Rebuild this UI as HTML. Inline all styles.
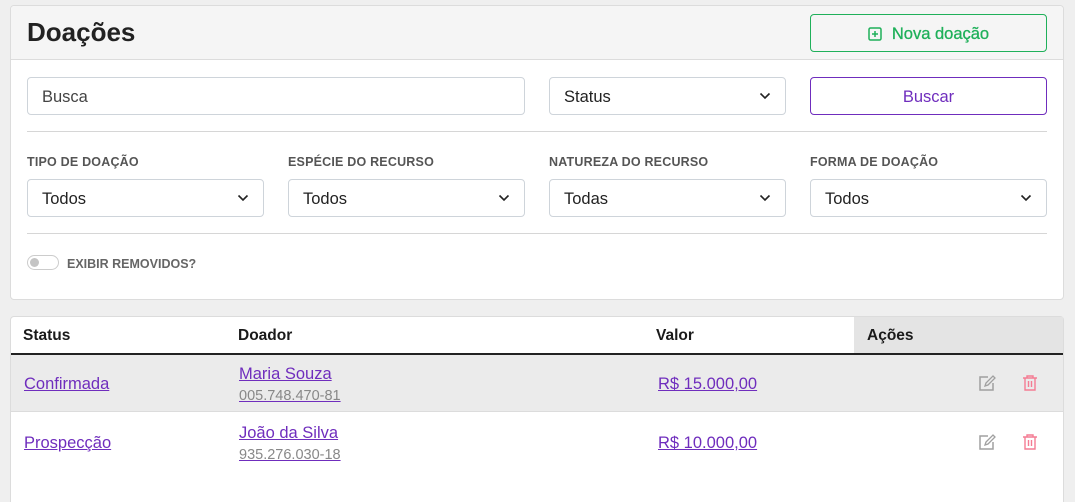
<!DOCTYPE html>
<html><head><meta charset="utf-8"><style>
*{box-sizing:border-box;margin:0;padding:0}
html,body{width:1075px;height:502px;overflow:hidden}
body{background:#efefef;font-family:"Liberation Sans",Arial,sans-serif;position:relative;color:#222}
.abs{position:absolute}
.card{position:absolute;left:10px;width:1054px;background:#fff;border:1px solid #dcdcdc;border-radius:4px}
.field{position:absolute;height:38px;border:1px solid #ced4da;border-radius:4px;background:#fff;font-size:16.5px;line-height:38px;padding-left:14px;color:#222}
.chev{position:absolute;right:14px;top:14px;width:12px;height:8px}
.lbl{position:absolute;top:155px;font-size:12.5px;font-weight:bold;color:#555;letter-spacing:.2px}
.hr{position:absolute;left:27px;width:1020px;height:1px;background:#d6d6d6}
a{color:#6f2dbd;text-decoration:underline}
.th{position:absolute;top:327px;font-size:15.5px;font-weight:bold;color:#1a1a1a}
</style></head><body>
<div class="card" style="top:5px;height:295px"></div>
<div class="abs" style="left:11px;top:6px;width:1052px;height:54px;background:#f5f5f5;border-bottom:1px solid #dcdcdc;border-radius:4px 4px 0 0"></div>
<div class="abs" style="left:27px;top:17px;font-size:26px;font-weight:bold;color:#222">Doações</div>
<div class="abs" style="left:810px;top:14px;width:237px;height:38px;border:1px solid #1fb05a;border-radius:4px;color:#1fb05a;font-size:16.5px;line-height:38px;text-align:center;-webkit-text-stroke:0.3px #1fb05a">
<svg width="14" height="14" viewBox="0 0 14 14" style="vertical-align:-2px;margin-right:10px"><rect x="1" y="1" width="12" height="12" rx="1.5" fill="none" stroke="#1fb05a" stroke-width="1.5"/><path d="M7 4v6M4 7h6" stroke="#1fb05a" stroke-width="1.5"/></svg>Nova doação</div>

<div class="field" style="left:27px;top:77px;width:498px;color:#444">Busca</div>
<div class="field" style="left:549px;top:77px;width:237px">Status<svg class="chev" viewBox="0 0 12 8"><path d="M1.5 1.5l4.5 4.5 4.5-4.5" fill="none" stroke="#222" stroke-width="1.6"/></svg></div>
<div class="abs" style="left:810px;top:77px;width:237px;height:38px;border:1px solid #6f2dbd;border-radius:4px;color:#6f2dbd;font-size:16.5px;line-height:38px;text-align:center">Buscar</div>
<div class="hr" style="top:131px"></div>

<div class="lbl" style="left:27px">TIPO DE DOAÇÃO</div>
<div class="lbl" style="left:288px">ESPÉCIE DO RECURSO</div>
<div class="lbl" style="left:549px">NATUREZA DO RECURSO</div>
<div class="lbl" style="left:810px">FORMA DE DOAÇÃO</div>
<div class="field" style="left:27px;top:179px;width:237px">Todos<svg class="chev" viewBox="0 0 12 8"><path d="M1.5 1.5l4.5 4.5 4.5-4.5" fill="none" stroke="#222" stroke-width="1.6"/></svg></div>
<div class="field" style="left:288px;top:179px;width:237px">Todos<svg class="chev" viewBox="0 0 12 8"><path d="M1.5 1.5l4.5 4.5 4.5-4.5" fill="none" stroke="#222" stroke-width="1.6"/></svg></div>
<div class="field" style="left:549px;top:179px;width:237px">Todas<svg class="chev" viewBox="0 0 12 8"><path d="M1.5 1.5l4.5 4.5 4.5-4.5" fill="none" stroke="#222" stroke-width="1.6"/></svg></div>
<div class="field" style="left:810px;top:179px;width:237px">Todos<svg class="chev" viewBox="0 0 12 8"><path d="M1.5 1.5l4.5 4.5 4.5-4.5" fill="none" stroke="#222" stroke-width="1.6"/></svg></div>
<div class="hr" style="top:233px"></div>

<div class="abs" style="left:27px;top:255px;width:32px;height:15px;border:1px solid #ccc;border-radius:8px;background:#fff"></div>
<div class="abs" style="left:30px;top:258px;width:9px;height:9px;border-radius:50%;background:#c4c4c4"></div>
<div class="abs" style="left:67px;top:257px;font-size:12.5px;font-weight:bold;color:#666">EXIBIR REMOVIDOS?</div>

<div class="card" style="top:316px;height:190px"></div>
<div class="abs" style="left:854px;top:317px;width:209px;height:36px;background:#e4e4e4"></div>
<div class="abs" style="left:11px;top:353px;width:1052px;height:2px;background:#222"></div>
<div class="th" style="left:23px">Status</div>
<div class="th" style="left:238px">Doador</div>
<div class="th" style="left:656px">Valor</div>
<div class="th" style="left:867px">Ações</div>

<div class="abs" style="left:11px;top:355px;width:1052px;height:57px;background:#ebebeb;border-bottom:1px solid #dcdcdc"></div>

<a class="abs" style="left:24px;top:375px;font-size:16.5px">Confirmada</a>
<a class="abs" style="left:239px;top:365px;font-size:16.5px">Maria Souza</a>
<a class="abs" style="left:239px;top:388px;font-size:14.5px;color:#888;text-decoration-color:#6f2dbd">005.748.470-81</a>
<a class="abs" style="left:658px;top:375px;font-size:16.5px">R$ 15.000,00</a>

<a class="abs" style="left:24px;top:434px;font-size:16.5px">Prospecção</a>
<a class="abs" style="left:239px;top:424px;font-size:16.5px">João da Silva</a>
<a class="abs" style="left:239px;top:447px;font-size:14.5px;color:#888;text-decoration-color:#6f2dbd">935.276.030-18</a>
<a class="abs" style="left:658px;top:434px;font-size:16.5px">R$ 10.000,00</a>

<svg class="abs" style="left:978px;top:374px" width="19" height="18" viewBox="0 0 19 18"><path d="M10 3H2v13h13V9" fill="none" stroke="#a0a0a0" stroke-width="1.5"/><path d="M7 12l1-3 7-7 2 2-7 7z" fill="none" stroke="#a0a0a0" stroke-width="1.3"/></svg>
<svg class="abs" style="left:1022px;top:374px" width="16" height="18" viewBox="0 0 16 18"><path d="M1 4h14M5 4V2h6v2M3 4v12h10V4M6.5 7v6M9.5 7v6" fill="none" stroke="#f47c93" stroke-width="1.4"/></svg>
<svg class="abs" style="left:978px;top:433px" width="19" height="18" viewBox="0 0 19 18"><path d="M10 3H2v13h13V9" fill="none" stroke="#a0a0a0" stroke-width="1.5"/><path d="M7 12l1-3 7-7 2 2-7 7z" fill="none" stroke="#a0a0a0" stroke-width="1.3"/></svg>
<svg class="abs" style="left:1022px;top:433px" width="16" height="18" viewBox="0 0 16 18"><path d="M1 4h14M5 4V2h6v2M3 4v12h10V4M6.5 7v6M9.5 7v6" fill="none" stroke="#f47c93" stroke-width="1.4"/></svg>
</body></html>
